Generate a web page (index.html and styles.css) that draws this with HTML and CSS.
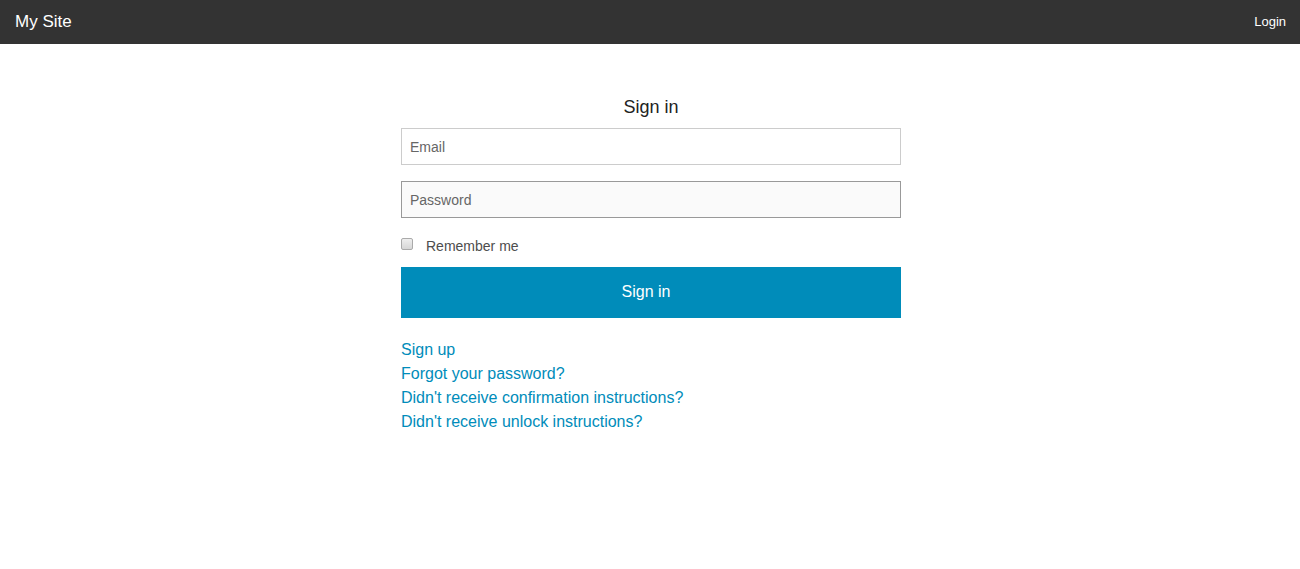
FILE: index.html
```html
<!DOCTYPE html>
<html>
<head>
<meta charset="utf-8">
<link rel="stylesheet" href="styles.css">
</head>
<body>
<nav class="topbar">
  <a class="brand" href="#">My Site</a>
  <a class="login" href="#">Login</a>
</nav>
<main class="page">
  <form class="signin">
    <h2 class="title">Sign in</h2>
    <input class="field" type="email" placeholder="Email">
    <input class="field field-focus" type="password" placeholder="Password">
    <label class="remember"><input class="check" type="checkbox"><span>Remember me</span></label>
    <button class="submit" type="button">Sign in</button>
    <div class="links">
      <a href="#">Sign up</a>
      <a href="#">Forgot your password?</a>
      <a href="#">Didn't receive confirmation instructions?</a>
      <a href="#">Didn't receive unlock instructions?</a>
    </div>
  </form>
</main>
</body>
</html>
```

FILE: styles.css
```css
* { box-sizing: border-box; }
body {
  margin: 0;
  font-family: "Liberation Sans", Arial, sans-serif;
  color: #222;
  background: #fff;
}
.topbar {
  height: 44px;
  background: #333;
  display: flex;
  align-items: center;
  justify-content: space-between;
  padding: 0 14px 1px 15px;
}
.brand {
  color: #fff;
  text-decoration: none;
  font-size: 17px;
}
.login {
  color: #fff;
  text-decoration: none;
  font-size: 13px;
}
.page {
  display: flex;
  justify-content: center;
  padding: 52px 0 0 2px;
}
.signin {
  width: 500px;
  display: flex;
  flex-direction: column;
}
.title {
  margin: 0 0 10px;
  font-size: 18px;
  font-weight: normal;
  text-align: center;
  line-height: 22px;
  color: #222;
}
.field {
  display: block;
  width: 100%;
  height: 37px;
  border: 1px solid #ccc;
  background: #fff;
  padding: 0 8px;
  font-family: inherit;
  font-size: 14px;
  color: #222;
  margin: 0 0 16px;
  outline: none;
}
.field::placeholder { color: #666; }
.field-focus {
  border-color: #999;
  background: #fafafa;
}
.remember {
  display: flex;
  align-items: center;
  font-size: 14px;
  color: #4d4d4d;
  height: 18px;
  margin: 3px 0 12px;
}
.check {
  appearance: none;
  -webkit-appearance: none;
  width: 12px;
  height: 12px;
  margin: 0 13px 0 0;
  border: 1px solid #aaa;
  border-radius: 2px;
  background: linear-gradient(#eee, #d6d6d6);
  position: relative;
  top: -2px;
}
.submit {
  display: block;
  width: 100%;
  height: 51px;
  border: 0;
  background: #008cba;
  color: #fff;
  font-family: inherit;
  font-size: 16px;
  padding: 0 10px 2px 0;
  margin: 0 0 20px;
}
.links {
  display: flex;
  flex-direction: column;
  align-items: flex-start;
}
.links a {
  color: #008cba;
  text-decoration: none;
  font-size: 16px;
  line-height: 24px;
}
```
